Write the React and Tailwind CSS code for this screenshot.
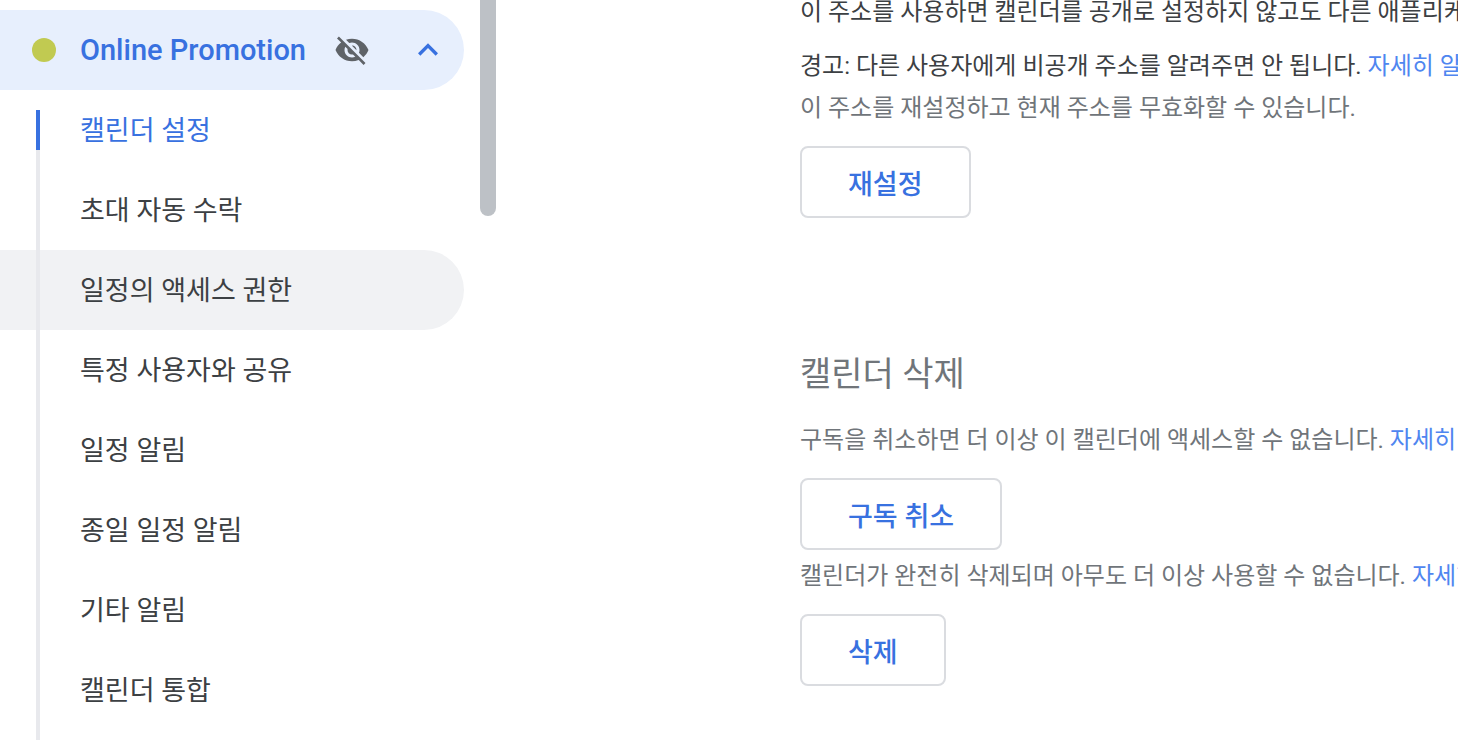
import React from 'react';

const menuItems = [
  { key: 'settings', label: '캘린더 설정', active: true },
  { key: 'auto-accept', label: '초대 자동 수락' },
  { key: 'access', label: '일정의 액세스 권한', hovered: true },
  { key: 'share', label: '특정 사용자와 공유' },
  { key: 'event-notice', label: '일정 알림' },
  { key: 'all-day-notice', label: '종일 일정 알림' },
  { key: 'other-notice', label: '기타 알림' },
  { key: 'integration', label: '캘린더 통합' }
];

const HiddenIcon = () => (
  <svg viewBox="0 0 24 24" className="size-9 shrink-0 fill-[#5f6368]" aria-hidden="true">
    <path d="M12 7c2.76 0 5 2.24 5 5 0 .65-.13 1.26-.36 1.83l2.92 2.92c1.51-1.26 2.7-2.89 3.43-4.75-1.73-4.39-6-7.5-11-7.5-1.4 0-2.74.25-3.98.7l2.16 2.16C10.74 7.13 11.35 7 12 7zM2 4.27l2.28 2.28.46.46C3.08 8.3 1.78 10.02 1 12c1.73 4.39 6 7.5 11 7.5 1.55 0 3.03-.3 4.38-.84l.42.42L19.73 22 21 20.73 3.27 3 2 4.27zM7.53 9.8l1.55 1.55c-.05.21-.08.43-.08.65 0 1.66 1.34 3 3 3 .22 0 .44-.03.65-.08l1.55 1.55c-.67.33-1.41.53-2.2.53-2.76 0-5-2.24-5-5 0-.79.2-1.53.53-2.2zm4.31-.78l3.15 3.15.02-.16c0-1.66-1.34-3-3-3l-.17.01z" />
  </svg>
);

const ChevronUp = () => (
  <svg viewBox="0 0 24 24" className="size-10 shrink-0 fill-[#3871e0]" aria-hidden="true">
    <path d="M7.41 15.41 12 10.83l4.59 4.58L18 14l-6-6-6 6z" />
  </svg>
);

const Sidebar = () => (
  <aside className="flex w-[496px] shrink-0 items-start justify-between">
    <nav className="flex h-full w-[464px] flex-col pt-[10px]">
      <button
        type="button"
        aria-expanded="true"
        className="flex h-20 shrink-0 items-center rounded-r-full bg-[#e7effd] pr-4 pl-8"
      >
        <span className="size-6 shrink-0 rounded-full bg-[#c1ca51]" />
        <span className="ml-6 grow pt-[2px] text-left text-[29px] font-medium whitespace-nowrap text-[#3871e0]">
          Online Promotion
        </span>
        <HiddenIcon />
        <span className="ml-[38px] flex">
          <ChevronUp />
        </span>
      </button>

      <ul className="relative grow">
        {menuItems.map((item) => (
          <li key={item.key}>
            <a
              href={`#${item.key}`}
              className={`flex h-20 items-center rounded-r-full pt-[2px] pl-20 text-[27px] ${
                item.active ? 'text-[#3871e0]' : 'text-[#3c4043]'
              } ${item.hovered ? 'bg-[#f1f2f4]' : ''}`}
            >
              {item.label}
            </a>
          </li>
        ))}
        {/* section track with the current position on top */}
        <li aria-hidden="true" className="absolute top-5 bottom-0 left-9 w-1 bg-[#e8e9ed]">
          <div className="h-10 bg-[#3871e0]" />
        </li>
      </ul>
    </nav>
    <div className="h-[216px] w-4 rounded-b-full bg-[#bdc1c6]" />
  </aside>
);

const MoreLink = () => (
  <a href="#help" className="text-[#4f86f0]">
    자세히 알아보기
  </a>
);

const OutlineButton = ({ children }) => (
  <button
    type="button"
    className="mt-[17px] block h-[72px] rounded-lg border-2 border-[#dadce0] bg-white px-[46px] pt-[6px] text-[27px] font-medium text-[#3871e0]"
  >
    {children}
  </button>
);

const App = () => {
  return (
    <div className="flex h-screen overflow-hidden bg-white font-['Roboto','Noto_Sans_CJK_KR',sans-serif]">
      <Sidebar />
      <main className="-mt-[9px] ml-[304px] min-w-0 flex-1 overflow-hidden text-2xl/[42px] whitespace-nowrap text-[#70757a]">
        <section>
          <p className="text-[#3c4043]">
            이 주소를 사용하면 캘린더를 공개로 설정하지 않고도 다른 애플리케이션에서 캘린더에 액세스할 수 있습니다.
          </p>
          <p className="mt-3 text-[#3c4043]">
            경고: 다른 사용자에게 비공개 주소를 알려주면 안 됩니다. <MoreLink />
          </p>
          <p>이 주소를 재설정하고 현재 주소를 무효화할 수 있습니다.</p>
          <OutlineButton>재설정</OutlineButton>
        </section>

        <section className="mt-[132px]">
          <h2 className="mb-[21px] text-[34px]/[48px]">캘린더 삭제</h2>
          <p>
            구독을 취소하면 더 이상 이 캘린더에 액세스할 수 없습니다. <MoreLink />
          </p>
          <OutlineButton>구독 취소</OutlineButton>
          <p className="mt-[5px]">
            캘린더가 완전히 삭제되며 아무도 더 이상 사용할 수 없습니다. <MoreLink />
          </p>
          <OutlineButton>삭제</OutlineButton>
        </section>
      </main>
    </div>
  );
};

export default App;
